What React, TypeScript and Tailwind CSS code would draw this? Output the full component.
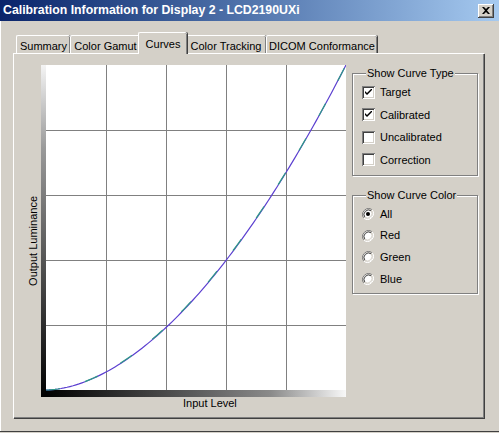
import React from "react";

const font = { fontFamily: '"Liberation Sans", Arial, sans-serif' };

function CloseButton() {
  return (
    <div className="flex h-[14px] w-[16px] items-center justify-center bg-[#d4d0c8] shadow-[inset_-1px_-1px_0_#404040,inset_1px_1px_0_#ffffff,inset_-2px_-2px_0_#808080]">
      <svg width="8" height="7" viewBox="0 0 8 7">
        <path d="M0 0 L2 0 L4 2 L6 0 L8 0 L5 3.5 L8 7 L6 7 L4 5 L2 7 L0 7 L3 3.5 Z" fill="#000" />
      </svg>
    </div>
  );
}

function TitleBar() {
  return (
    <div className="flex h-[21px] items-center justify-between bg-linear-to-r from-[#0a246a] to-[#a6caf0] pl-[3px] pr-[5px]">
      <span className="text-[12.3px] font-bold leading-none text-white">
        Calibration Information for Display 2 - LCD2190UXi
      </span>
      <CloseButton />
    </div>
  );
}

const tabs = [
  { label: "Summary", w: "w-[54px]" },
  { label: "Color Gamut", w: "w-[70px]" },
  { label: "Curves", w: "w-[49px]", active: true },
  { label: "Color Tracking", w: "w-[81px]" },
  { label: "DICOM Conformance", w: "w-[111px]" },
];

function Tabs() {
  return (
    <div className="flex h-[21px] items-end pl-[3px]">
      {tabs.map((t) =>
        t.active ? (
          <div
            key={t.label}
            className={`${t.w} relative z-10 -mx-[2px] -mb-px flex h-[22px] items-start justify-center rounded-t-[2px] border-l border-t border-white bg-[#d4d0c8] pt-[3px] text-[11px] text-black shadow-[inset_-1px_0_0_#808080,1px_0_0_#404040]`}
          >
            {t.label}
          </div>
        ) : (
          <div
            key={t.label}
            className={`${t.w} flex h-[18px] items-start justify-center rounded-t-[2px] border-l border-t border-white pt-[2px] text-[11px] text-black shadow-[inset_-1px_0_0_#808080,1px_0_0_#404040]`}
          >
            {t.label}
          </div>
        ),
      )}
    </div>
  );
}

function Chart() {
  const pts: string[] = [];
  const pts2: string[] = [];
  for (let i = 0; i <= 100; i++) {
    const t = i / 100;
    pts.push(`${(5 + 300 * t).toFixed(2)},${(325 - 325 * Math.pow(t, 1.8)).toFixed(2)}`);
    pts2.push(`${(5 + 300 * t).toFixed(2)},${(325 - 325 * Math.pow(t, 1.79)).toFixed(2)}`);
  }
  const vx = [65, 125, 185, 245];
  const hy = [65, 130, 195, 260];
  return (
    <svg width="305" height="332" viewBox="0 0 305 332" className="block">
      <defs>
        <linearGradient id="vbar" x1="0" y1="0" x2="0" y2="1">
          <stop offset="0" stopColor="#f4f4f4" />
          <stop offset="0.25" stopColor="#9a9a9a" />
          <stop offset="1" stopColor="#000000" />
        </linearGradient>
        <linearGradient id="hbar" x1="0" y1="0" x2="1" y2="0">
          <stop offset="0" stopColor="#000000" />
          <stop offset="0.75" stopColor="#8a8a8a" />
          <stop offset="1" stopColor="#f8f8f8" />
        </linearGradient>
      </defs>
      <rect x="5" y="0" width="300" height="325" fill="#ffffff" />
      {vx.map((x) => (
        <line key={x} x1={x + 0.5} y1="0" x2={x + 0.5} y2="325" stroke="#808080" strokeWidth="1" />
      ))}
      {hy.map((y) => (
        <line key={y} x1="5" y1={y + 0.5} x2="305" y2={y + 0.5} stroke="#808080" strokeWidth="1" />
      ))}
      <rect x="0" y="0" width="5" height="332" fill="url(#vbar)" />
      <rect x="4" y="325" width="301" height="7" fill="url(#hbar)" />
      <polyline points={pts.join(" ")} fill="none" stroke="#5b3fd0" strokeWidth="1.2" />
      <polyline
        points={pts2.join(" ")}
        fill="none"
        stroke="#2f9a86"
        strokeWidth="1.2"
        strokeDasharray="14 26"
      />
    </svg>
  );
}

function CheckBox({ checked }: { checked?: boolean }) {
  return (
    <div className="flex h-[13px] w-[13px] items-center justify-center bg-white shadow-[inset_1px_1px_0_#808080,inset_-1px_-1px_0_#ffffff,inset_2px_2px_0_#404040,inset_-2px_-2px_0_#d4d0c8]">
      {checked && (
        <svg width="7" height="7" viewBox="0 0 7 7">
          <path d="M0 2 L0 4 L2 6 L7 1 L7 -1 L2 4 Z" fill="#000" />
        </svg>
      )}
    </div>
  );
}

function Radio({ checked }: { checked?: boolean }) {
  return (
    <svg width="12" height="12" viewBox="0 0 12 12">
      <path d="M10.2 1.8 A6 6 0 0 0 1.8 10.2" fill="none" stroke="#808080" strokeWidth="1" />
      <path d="M1.8 10.2 A6 6 0 0 0 10.2 1.8" fill="none" stroke="#ffffff" strokeWidth="1" />
      <circle cx="6" cy="6" r="4.5" fill="#ffffff" />
      <path d="M9.2 2.8 A4.6 4.6 0 0 0 2.8 9.2" fill="none" stroke="#404040" strokeWidth="1" />
      <path d="M2.8 9.2 A4.6 4.6 0 0 0 9.2 2.8" fill="none" stroke="#d4d0c8" strokeWidth="1" />
      {checked && <circle cx="6" cy="6" r="2" fill="#000" />}
    </svg>
  );
}

function GroupBox({
  title,
  className,
  children,
}: {
  title: string;
  className?: string;
  children: React.ReactNode;
}) {
  return (
    <fieldset
      className={`w-[126px] border border-[#808080] shadow-[inset_1px_1px_0_#ffffff,1px_1px_0_#ffffff] ${className ?? ""}`}
    >
      <legend className="ml-[4px] bg-[#d4d0c8] px-px text-[11px] leading-[13px] text-black">
        {title}
      </legend>
      {children}
    </fieldset>
  );
}

const curveTypes = [
  { label: "Target", checked: true },
  { label: "Calibrated", checked: true },
  { label: "Uncalibrated" },
  { label: "Correction" },
];

const curveColors = [
  { label: "All", checked: true },
  { label: "Red" },
  { label: "Green" },
  { label: "Blue" },
];

export default function App() {
  return (
    <div style={font} className="relative h-[433px] w-[499px] overflow-hidden bg-[#d4d0c8]">
      <div className="h-[432px] border-b border-[#404040] shadow-[inset_1px_0_0_#ffffff]">
        <TitleBar />
        <div className="pl-[13px] pr-[15px] pt-[11px]">
          <Tabs />
          <div className="h-[365px] w-[471px] border-l border-t border-white shadow-[inset_-1px_-1px_0_#808080,1px_1px_0_#404040]">
            <div className="flex pt-[11px]">
              <div className="flex flex-col">
                <div className="flex">
                  <div className="flex w-[27px] items-start justify-end pr-[1px] pt-[131px]">
                    <span className="rotate-180 text-[11px] leading-[13px] text-black [writing-mode:vertical-rl]">
                      Output Luminance
                    </span>
                  </div>
                  <Chart />
                </div>
                <div className="pl-[169px] text-[11px] leading-[12px] text-black">Input Level</div>
              </div>
              <div className="ml-[6px] flex flex-col pt-[2px]">
                <GroupBox title="Show Curve Type" className="pb-[4px] pl-[9px] pt-[1px]">
                  {curveTypes.map((c) => (
                    <div key={c.label} className="flex h-[22.5px] items-center gap-[5px] text-[11px] text-black">
                      <CheckBox checked={c.checked} />
                      <span>{c.label}</span>
                    </div>
                  ))}
                </GroupBox>
                <GroupBox title="Show Curve Color" className="mt-[13px] pb-[3px] pl-[9px] pt-[1px]">
                  {curveColors.map((c) => (
                    <div key={c.label} className="flex h-[21.7px] items-center gap-[6px] text-[11px] text-black">
                      <Radio checked={c.checked} />
                      <span>{c.label}</span>
                    </div>
                  ))}
                </GroupBox>
              </div>
            </div>
          </div>
        </div>
      </div>
    </div>
  );
}
